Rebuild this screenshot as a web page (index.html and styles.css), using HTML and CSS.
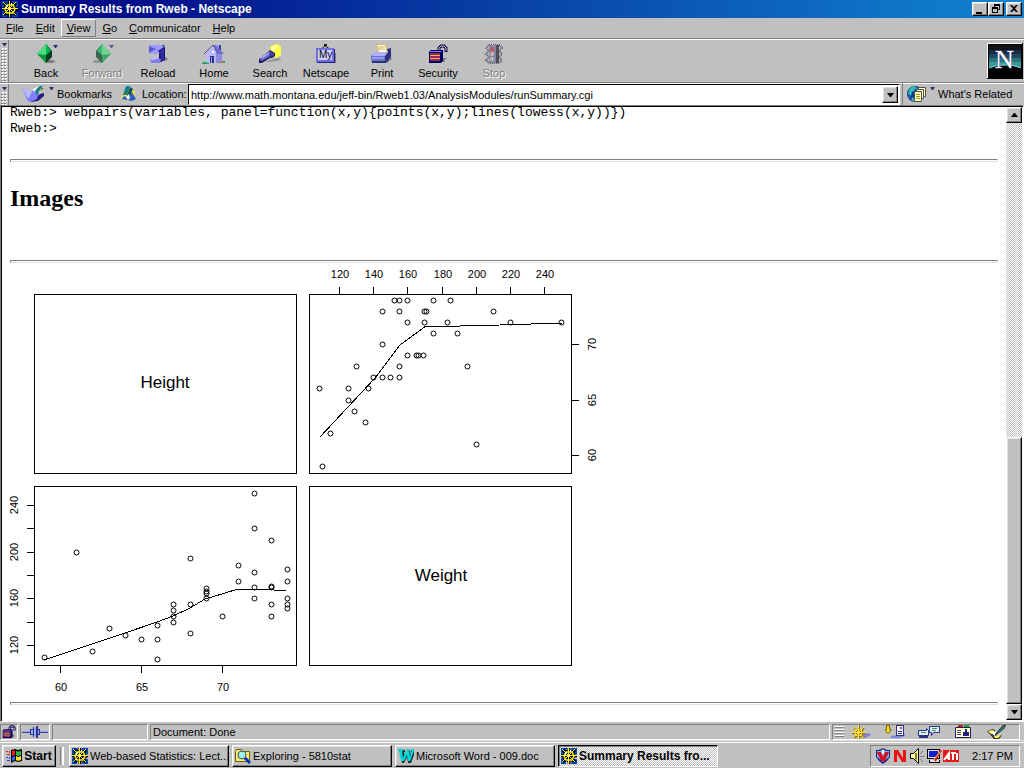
FILE: index.html
```html
<!DOCTYPE html>
<html lang="en">
<head>
    <meta charset="UTF-8">
    <meta name="viewport" content="width=device-width, initial-scale=1.0">
    <title>Summary Results from Rweb - Netscape</title>
    <link rel="stylesheet" href="styles.css">
</head>
<body>
    <!-- Shared icons -->
    <svg class="sprites" aria-hidden="true">
        <symbol id="wheel" viewBox="0 0 16 16">
            <path fill="#0048b8" d="M0 0h6v4H3v3H0zM10 0h6v6h-5zM0 10h5v6H0zM11 11h5v5h-6z"/>
            <path fill="none" stroke="#000" stroke-width="3" d="M8 0v16M0 8h16M2 2l12 12M14 2L2 14"/>
            <path fill="none" stroke="#000" stroke-width="3" d="M5 4l6 0 2 4-2 4H5L3 8z"/>
            <path fill="none" stroke="#ffee20" d="M7.5 0v16M0 7.500h16M1 1l13 13M14 1L1 14"/>
            <path fill="none" stroke="#ffee20" stroke-width="1.500" d="M5 4l6 0 2 4-2 4H5L3 8z"/>
            <path fill="#fff" d="M4 4h2v1H5v2H4zM9 2h1v2H9z"/>
            <path fill="#fff8a0" d="M7 7h2v2H7z"/>
        </symbol>
        <symbol id="gem" viewBox="0 0 20 20">
            <path fill="#808080" d="M8 16h10v1h2l-3 2H9z"/>
            <path fill="#0a9a3c" d="M10 0L1 10l9 9z"/>
            <path fill="#4cdc80" d="M10 0L1 10l9 1z"/>
            <path fill="#004020" d="M10 0l6 7v6l-6 6z"/>
            <path fill="#00b850" d="M10 0l5 7-5 4z"/>
        </symbol>
        <symbol id="lock" viewBox="0 0 20 20">
            <path fill="#808080" d="M14 14h5v1h-2v3h-3z"/>
            <path fill="none" stroke="#000060" stroke-width="3" d="M11 9V4l2-2h3l2 2v4"/>
            <path fill="none" stroke="#f0c090" d="M11 9V4l2-2h3l2 2v3"/>
            <path fill="#000060" d="M1 8l2-2h12v11l-2 2H1z"/>
            <path fill="#8080ff" d="M2 8l1-1h11l-1 1z"/>
            <path fill="#a02060" d="M2 9h10v2H2zM2 12h10v2H2zM2 15h10v2H2z"/>
            <path fill="#e0c040" d="M2 11h10v1H2zM2 14h10v1H2z"/>
        </symbol>
        <symbol id="arrow" viewBox="0 0 5 3">
            <path fill="#303070" d="M0 0h5L3 3H2z"/>
        </symbol>
    </svg>

    <header class="title-bar">
        <svg class="icon16"><use href="#wheel"/></svg>
        <h1>Summary Results from Rweb - Netscape</h1>
        <div class="window-buttons">
            <button class="raised" aria-label="Minimize"><svg viewBox="0 0 12 10"><path d="M2 8h6v2H2z"/></svg></button>
            <button class="raised" aria-label="Restore"><svg viewBox="0 0 12 10"><path d="M4 0h6v6H8V5h1V2H5v1H4zM2 3h6v6H2zm1 2v3h4V5z" fill-rule="evenodd"/></svg></button>
            <button class="raised close" aria-label="Close"><svg viewBox="0 0 12 10"><path d="M2 1h2l2 2 2-2h2L7 4.500 10 8H8L6 6 4 8H2l3-3.500z"/></svg></button>
        </div>
    </header>

    <nav class="menu-bar">
        <button><u>F</u>ile</button>
        <button><u>E</u>dit</button>
        <button class="active"><u>V</u>iew</button>
        <button><u>G</u>o</button>
        <button><u>C</u>ommunicator</button>
        <button><u>H</u>elp</button>
    </nav>

    <div class="toolbar">
        <div class="grip"><svg class="arrow"><use href="#arrow"/></svg></div>
        <div class="tools">
            <button class="tool">
                <span class="tool-icon"><svg class="icon20"><use href="#gem"/></svg><svg class="arrow drop"><use href="#arrow"/></svg></span>
                Back
            </button>
            <button class="tool" disabled>
                <span class="tool-icon"><svg class="icon20 flip"><use href="#gem"/></svg><svg class="arrow drop"><use href="#arrow"/></svg></span>
                Forward
            </button>
            <button class="tool">
                <span class="tool-icon"><svg class="icon20" viewBox="0 0 20 20">
                    <path fill="#808080" d="M15 11l5 4-3 2z"/>
                    <path fill="#101070" d="M6 1h10l1 3v12l-4 2H9l2-3V8l-4 2z"/>
                    <path fill="#9a9aff" d="M1 1h13l2 2-6 4 2 2-10 1V7l5-2-5-2z"/>
                    <path fill="#5c5cd0" d="M1 2l7 3-7 4z"/>
                    <path fill="#2c2ca0" d="M12 6l4-2v12l-3 1z"/>
                    <path fill="#8080f0" d="M2 15l6-2 5 2-1 4H3z"/>
                    <path fill="#c8c8ff" d="M2 15l6-2 3 1-6 2z"/>
                </svg></span>
                Reload
            </button>
            <button class="tool">
                <span class="tool-icon"><svg class="icon24" viewBox="0 0 24 20">
                    <path fill="#20a060" d="M1 18h6v2H0zM16 17h7v2h-7z"/>
                    <path fill="#e07040" d="M5 17h3v2H5zM18 17h3v2h-3z"/>
                    <path fill="#404090" d="M15 1h4v8h-4z"/>
                    <path fill="#9a9aff" d="M15 1h2v6h-2z"/>
                    <path fill="#b8b8ff" d="M5 9l6-6 3 4v12H5z"/>
                    <path fill="#8c8ce0" d="M14 9h6v9l-6 1z"/>
                    <path fill="#7070d0" d="M11 1h3l8 9h-6z"/>
                    <path fill="none" stroke="#50509a" d="M2 10l9-9 5 9"/>
                    <path fill="#303080" d="M8 12h4v7H8z"/>
                    <path fill="#9a9aff" d="M9 13h1v6H9z"/>
                    <path fill="#fff" d="M10 7h2v2h-2z"/>
                </svg></span>
                Home
            </button>
            <button class="tool">
                <span class="tool-icon"><svg class="icon24" viewBox="0 0 24 20">
                    <path fill="#ffff40" d="M12 3l3-2 5-1 3 3v8l-5 3-5-4z"/>
                    <path fill="#fffcb0" d="M15 2l5-1-3 6-4-1z"/>
                    <path fill="#909090" d="M6 18l13-4 5 1-5 2z"/>
                    <path fill="#202060" d="M1 15l9-7 2-2 5 3v3l-3 2h-2l-8 5H1z"/>
                    <path fill="#6c6cd0" d="M1 15l9-6 3 1-1 2-8 5z"/>
                    <path fill="#b0b0ff" d="M2 14l9-6h2l-8 6z"/>
                    <path fill="#4040a0" d="M12 7l4 2v2l-3 2-2-3z"/>
                </svg></span>
                Search
            </button>
            <button class="tool">
                <span class="tool-icon"><svg class="icon20" viewBox="0 0 20 20">
                    <path fill="#808080" d="M5 19h15V9h-2z"/>
                    <path fill="none" stroke="#202020" d="M5 5l4-3 5 3"/>
                    <path fill="#202020" d="M8 0h3v2H8z"/>
                    <path fill="#202080" d="M0 5h19v14H1z"/>
                    <path fill="#7070e0" d="M0 4h18v14H0z"/>
                    <path fill="#d0d0ff" d="M2 6h14v10H2z"/>
                    <text class="my-text" x="3" y="14">My</text>
                </svg></span>
                Netscape
            </button>
            <button class="tool">
                <span class="tool-icon"><svg class="icon24" viewBox="0 0 24 20">
                    <path fill="#808080" d="M7 18l14-4h2l-6 5z"/>
                    <path fill="#303080" d="M1 11l16-6 4-1v9l-5 6H2z"/>
                    <path fill="#fffbd8" stroke="#d8b860" d="M6.500.500h9l2 8h-9z"/>
                    <path stroke="#d8a860" d="M8 3h7M8 5h7"/>
                    <path fill="#b0b0ff" d="M1 11l4-3h13l-3 4H2z"/>
                    <path fill="#7070d0" d="M1 12h14v5H2z"/>
                    <path fill="#9a9aff" d="M2 13h12v2H2z"/>
                    <path fill="#00d040" d="M12 16h2v1h-2z"/>
                </svg></span>
                Print
            </button>
            <button class="tool">
                <span class="tool-icon"><svg class="icon20"><use href="#lock"/></svg></span>
                Security
            </button>
            <button class="tool" disabled>
                <span class="tool-icon"><svg class="icon20" viewBox="0 0 20 20">
                    <path fill="none" stroke="#303050" stroke-dasharray="1 1" stroke-width="2" d="M5 1h11l2 3-3 3 3 3-3 3 3 3-3 3H5l-3-3 3-3-3-3 3-3-3-3z"/>
                    <path fill="#707098" d="M5 1h9v18H5z"/>
                    <path fill="#202030" d="M12 1h3v18h-3z"/>
                    <circle cx="8" cy="5" r="2" fill="#e02020"/>
                    <circle cx="8" cy="10" r="2" fill="#e0b0a0"/>
                    <circle cx="8" cy="15" r="2" fill="#a0c8b0"/>
                </svg></span>
                Stop
            </button>
        </div>
        <svg class="netscape-logo" viewBox="0 0 36 36" role="img" aria-label="Netscape">
            <path fill="#000" d="M0 0h36v36H0z"/>
            <path fill="#fff" d="M0 0h35v1H1v34H0z"/>
            <path fill="#101418" d="M2 2h32v32H2z"/>
            <path fill="#182a44" d="M2 7h32v4H2z"/>
            <path fill="#20485c" d="M2 11h32v4H2z"/>
            <path fill="#2c747c" d="M2 15h32v4H2z"/>
            <path fill="#3c9a9c" d="M2 19h32v5H2z"/>
            <path fill="#000" d="M2 25q6-3 16-3t16 3v9H2z"/>
            <path fill="none" stroke="#80e0e0" d="M2 25q6-3 16-3t16 3"/>
            <text class="logo-letter" x="8" y="25">N</text>
        </svg>
    </div>

    <div class="toolbar location-bar">
        <div class="grip"><svg class="arrow"><use href="#arrow"/></svg></div>
        <button class="link-button bookmarks">
            <svg class="icon24" viewBox="0 0 24 18">
                <path fill="#202080" d="M8 17l8-1 6-5V8l-4 1z"/>
                <path fill="#8080ff" d="M0 3l5 2 4 2 5-3 3 3-2 7-7 3-3-2z"/>
                <path fill="#b8b8ff" d="M0 3l5 2 5 2-4 7z"/>
                <path fill="#108080" d="M13 5l5-4h3l-4 5-2 5z"/>
                <path fill="#fff" d="M11 4l6-3-5 6z"/>
                <path fill="#b07040" d="M19 3h3l-3 3z"/>
            </svg>
            <svg class="arrow"><use href="#arrow"/></svg>
            Bookmarks
        </button>
        <label class="location-label" for="location">
            <svg class="icon16" viewBox="0 0 16 16">
                <path fill="#ffe040" d="M0 12l5-8 5-2 4 4v6l-6 3z"/>
                <path fill="#2860c0" d="M1 13l2-3 4 2 4-6 4 7-4 2z"/>
                <path fill="#108080" d="M5 0h4l-3 9H2z"/>
                <path fill="#0a5060" d="M9 1l3 2-4 9H5z"/>
                <path fill="#fff" d="M5 11l3-3 1 4-2 2z"/>
            </svg>
            Location:
        </label>
        <div class="location-box">
            <input id="location" type="text" value="http://www.math.montana.edu/jeff-bin/Rweb1.03/AnalysisModules/runSummary.cgi">
            <button class="raised" aria-label="Show visited locations"><svg viewBox="0 0 7 4"><path d="M0 0h7L4 4H3z"/></svg></button>
        </div>
        <button class="link-button related">
            <svg class="icon20" viewBox="0 0 20 16">
                <circle cx="8" cy="8" r="8" fill="#103890"/>
                <path fill="#30b8b0" d="M2 3l4-3 4 1-3 4-2 1-1 4-3-2zM5 11l3 2v3l-4-2z"/>
                <path fill="#6090ff" d="M9 2l4 1-4 2zM1 10l2 1v2z"/>
                <path fill="#ffffc0" stroke="#505050" d="M11.500 1.500h7v9h-7z"/>
                <path fill="#ffffc0" stroke="#505050" d="M9.500 3.500h7v9h-7z"/>
                <path fill="#ffffc0" stroke="#505050" d="M7.500 5.500h7v10h-7z"/>
                <path stroke="#a09020" d="M9 8.500h4M9 10.500h4M9 12.500h4"/>
            </svg>
            <svg class="arrow"><use href="#arrow"/></svg>
            What's Related
        </button>
    </div>

    <div class="viewport">
        <main class="page">
<pre>Rweb:&gt; webpairs(variables, panel=function(x,y){points(x,y);lines(lowess(x,y))})
Rweb:&gt;</pre>
            <hr>
            <h2>Images</h2>
            <hr>
            <svg id="pairs" class="pairs" viewBox="10 263 600 439" role="img" aria-label="Pairs plot of Height and Weight">
                <path class="frame" d="M34.500 294.500h262v179h-262zM309.500 294.500h262v179h-262zM34.500 486.500h262v179h-262zM309.500 486.500h262v179h-262z"/>
                <text class="variable" x="165" y="388">Height</text>
                <text class="variable" x="441" y="581">Weight</text>
            </svg>
            <hr>
        </main>
        <div class="scrollbar">
            <button class="raised" aria-label="Scroll up"><svg viewBox="0 0 7 4"><path d="M3 0h1l3 4H0z"/></svg></button>
            <div class="track"><div class="thumb raised"></div></div>
            <button class="raised" aria-label="Scroll down"><svg viewBox="0 0 7 4"><path d="M0 0h7L4 4H3z"/></svg></button>
        </div>
    </div>

    <div class="status-bar">
        <div class="panel status-lock"><svg class="icon14"><use href="#lock"/></svg></div>
        <div class="panel status-plug">
            <svg viewBox="0 0 26 12">
                <path stroke="#4040a0" stroke-width="2" d="M0 6h9M17 6h9"/>
                <path stroke="#a0a0ff" d="M0 5.500h9M17 5.500h9"/>
                <path fill="#303090" d="M8 3h3V1h1v10h-1V9H8zM14 0h2v3h2v6h-2v3h-2z"/>
                <path fill="#8cb0f0" d="M9 4h2v4H9zM12 2h2v8h-2zM16 4h1v4h-1z"/>
            </svg>
        </div>
        <div class="panel status-progress"></div>
        <div class="panel status-text">Document: Done</div>
        <div class="panel components">
            <span class="ridges"></span>
            <button aria-label="Navigator">
                <svg class="icon20" viewBox="0 0 20 14">
                    <path fill="#8080d0" d="M10 10l8-2 2 2-6 3z"/>
                    <path stroke="#907000" stroke-width="2" d="M8 0v14M1 8h14M3 3l10 10M13 3L3 13"/>
                    <circle cx="8" cy="8" r="3.500" fill="none" stroke="#907000" stroke-width="2"/>
                    <path stroke="#ffe040" d="M7.500 0v14M0 7.500h15M2 2l11 11M13 2L2 13"/>
                    <circle cx="7.500" cy="7.500" r="3.500" fill="none" stroke="#ffe040"/>
                </svg>
            </button>
            <button aria-label="Inbox">
                <svg class="icon20" viewBox="0 0 20 14">
                    <path fill="#ffe020" stroke="#806000" d="M1.500.500h3v4h2l-3.500 4-3.500-4h2z"/>
                    <path fill="#8080e0" d="M6 11l15-2v2l-7 2H6z"/>
                    <path fill="#303080" d="M11 0h8v11h-8z"/>
                    <path fill="#f0f0ff" d="M12 1h6v9h-6z"/>
                    <path fill="#c04060" d="M15 2h2v2h-2z"/>
                    <path stroke="#303080" d="M13 6.500h4M13 8.500h4"/>
                </svg>
            </button>
            <button aria-label="Newsgroups">
                <svg class="icon24" viewBox="0 0 24 14">
                    <path fill="#d8f0ff" stroke="#303080" d="M1.500 5.500h8v-2l2 2v5h-10zM12.500 1.500h10v6h-6l-2 3v-3h-2z"/>
                    <path stroke="#303080" stroke-width="2" d="M2 12h9"/>
                    <path stroke="#409060" d="M4 7.500h5M15 3.500h5M15 5.500h4"/>
                </svg>
            </button>
            <button aria-label="Address Book">
                <svg class="icon16" viewBox="0 0 16 14">
                    <path fill="#c02020" d="M3 0h5v3H3z"/>
                    <path fill="#20a040" d="M9 0h5v3H9z"/>
                    <path fill="#ffffd0" stroke="#202060" d="M.500 2.500h15v10H.500z"/>
                    <path stroke="#404080" d="M2 5.500h4M2 7.500h4M2 9.500h4"/>
                    <path fill="#202080" d="M10 4h2v3h2v4H8V7h2z"/>
                </svg>
            </button>
            <button aria-label="Composer">
                <svg class="icon20" viewBox="0 0 20 14">
                    <path fill="#303030" d="M0 6l6-2 3 2 1 5 5-1-3 4H7z"/>
                    <path fill="#ffff60" d="M1 6l5-1 2 2-4 2zM7 11l7-1-3 3H8z"/>
                    <path fill="#fff" d="M4 8l5-2 4 3-5 2z"/>
                    <path fill="#303030" d="M8 9l8-9h3l-1 3-7 6-3 2z"/>
                    <path fill="#20a080" d="M10 8l7-7 1 1-7 6z"/>
                </svg>
            </button>
        </div>
    </div>

    <footer class="taskbar">
        <button class="start raised">
            <svg class="icon16" viewBox="0 0 16 14">
                <path fill="#000" d="M5 1l4-1 3 1 4-1v12l-4 1-3-1-4 2z"/>
                <path fill="#f02020" d="M6 2l3-1v5L6 7z"/>
                <path fill="#20c040" d="M10 2l2 .500L15 2v4l-3 1-2-1z"/>
                <path fill="#3060ff" d="M6 8l3-1v4l-3 1z"/>
                <path fill="#ffe020" d="M10 7l2 1 3-1v4l-3 1-2-1z"/>
                <path fill="#e02020" d="M0 2h2v1H0zM3 2h1v2H3zM1 5h3v1H1z"/>
                <path fill="#2040e0" d="M0 8h2v1H0zM3 8h1v2H3zM1 11h3v1H1z"/>
            </svg>
            Start
        </button>
        <span class="handle"></span>
        <div class="tasks">
            <button class="raised"><svg class="icon16"><use href="#wheel"/></svg><span>Web-based Statistics: Lect...</span></button>
            <button class="raised">
                <svg class="icon16" viewBox="0 0 16 16">
                    <path fill="#ffe878" stroke="#706000" d="M.500 3.500l1-2h5l1 2h7v10H.500z"/>
                    <circle cx="7" cy="7" r="4" fill="#a0f0f0" stroke="#405060"/>
                    <path stroke="#0030c0" stroke-width="3" d="M10 10l5 5"/>
                </svg>
                <span>Exploring - 5810stat</span>
            </button>
            <button class="raised">
                <svg class="icon16" viewBox="0 0 16 16">
                    <path fill="#003030" d="M1 2h6v2H6l1 5 3-7h2l1 7 1-5h-1V2h4v2l-4 11h-3l-1-6-3 6H4L2 4H1z"/>
                    <path fill="#00d8d8" d="M0 1h5v2H4l1 7 4-9h2l1 8 2-6h-1V1h3v2l-4 10h-2L9 7l-3 6H3L1 3H0z"/>
                </svg>
                <span>Microsoft Word - 009.doc</span>
            </button>
            <button class="current"><svg class="icon16"><use href="#wheel"/></svg><span>Summary Results fro...</span></button>
        </div>
        <div class="tray">
            <svg class="icon16" viewBox="0 0 16 16">
                <path fill="#202080" d="M1 2h3l4-2 4 2h3v7l-3 4-4 3-4-3-3-4z"/>
                <path fill="#80b0f0" d="M2 3h3l3-2 3 2h3v6l-6 5-6-5z"/>
                <path fill="#fff" d="M7 2h2v4H7z"/>
                <path fill="#d01020" d="M2 4h4l2 5 2-5h4l-4 9H6z"/>
            </svg>
            <svg class="icon16" viewBox="0 0 16 16"><path fill="#f01010" d="M2 2h4l5 8V2h3v12h-4L5 6v8H2z"/></svg>
            <svg class="icon16" viewBox="0 0 16 16">
                <path fill="#ffff90" stroke="#000" d="M1.500 5.500h3l5-5v15l-5-5h-3z"/>
                <path fill="#808040" d="M6 5h2v8l-2-2z"/>
                <path stroke="#808080" d="M11 6l3-3M11 8.500h5M11 11l3 3"/>
            </svg>
            <svg class="icon16" viewBox="0 0 16 16">
                <path fill="#000" d="M1 1h13v10H1zM3 12h11v3H3z"/>
                <path fill="#e0e0e0" d="M2 2h11v8H2zM4 12h9v2H4z"/>
                <path fill="#1020d0" d="M3 3h9v6H3z"/>
                <path stroke="#e02020" stroke-width="2" d="M9 13l6-11"/>
                <path stroke="#ffe020" d="M8 11l6-7"/>
            </svg>
            <svg class="icon16" viewBox="0 0 16 16">
                <path fill="#e81818" d="M0 2h16v12H0z"/>
                <path fill="none" stroke="#fff" stroke-width="2" d="M1 12l5-7v7M3 10h3M8 5h5M10 5v7M14 5v7"/>
            </svg>
            <time>2:17 PM</time>
        </div>
    </footer>

    <script src="plot.js"></script>
</body>
</html>
```

FILE: styles.css
```css
:root {
    --face: #c0c0c0;
    --shadow: #808080;
    --light: #e0e0e0;
    --title-start: #000080;
    --title-end: #1084d0;
}

* {
    margin: 0;
    padding: 0;
    box-sizing: border-box;
}

body {
    display: flex;
    flex-direction: column;
    height: 100vh;
    overflow: hidden;
    background: var(--face);
    color: #000;
    font-family: "Liberation Sans", Arial, sans-serif;
    font-size: 11px;
    line-height: 14px;
}

button,
input {
    font: inherit;
    color: inherit;
    background: none;
    border: none;
    border-radius: 0;
}

button {
    white-space: nowrap;
}

svg {
    flex: none;
}

.sprites {
    position: absolute;
    width: 0;
    height: 0;
}

.icon14 { width: 14px; height: 14px; }
.icon16 { width: 16px; height: 16px; }
.icon20 { width: 20px; height: 20px; }
.icon24 { width: 24px; height: 20px; }
.arrow { width: 5px; height: 3px; }

.raised {
    display: flex;
    align-items: center;
    justify-content: center;
    background: var(--face);
    border: 1px solid;
    border-color: #fff #000 #000 #fff;
    box-shadow: inset -1px -1px var(--shadow), inset 1px 1px var(--light);
}

/* Title bar */
.title-bar {
    display: flex;
    align-items: center;
    gap: 3px;
    height: 18px;
    padding: 0 2px;
    background: linear-gradient(to right, var(--title-start), var(--title-end));
    color: #fff;
}

.title-bar h1 {
    flex: 1;
    font-size: 12px;
}

.window-buttons {
    display: flex;
}

.window-buttons button {
    width: 16px;
    height: 14px;
}

.window-buttons svg {
    width: 12px;
    height: 10px;
}

.window-buttons .close {
    margin-left: 2px;
}

/* Menu bar */
.menu-bar {
    display: flex;
    align-items: center;
    height: 20px;
}

.menu-bar button {
    height: 18px;
    padding: 0 5px;
    border: 1px solid transparent;
}

.menu-bar .active {
    border-color: #fff var(--shadow) var(--shadow) #fff;
}

/* Toolbars */
.toolbar {
    display: flex;
    height: 44px;
    border-top: 1px solid var(--shadow);
    box-shadow: inset 0 1px #fff;
}

.grip {
    display: flex;
    flex-direction: column;
    align-items: center;
    gap: 2px;
    width: 9px;
    padding-top: 3px;
    margin-top: 1px;
    border-right: 1px solid var(--shadow);
}

.grip::after {
    content: "";
    flex: 1;
    width: 6px;
    background: conic-gradient(#fff 25%, transparent 0 50%, var(--shadow) 0 75%, transparent 0) 0 0 / 3px 3px;
}

.tools {
    display: flex;
    flex: 1;
    padding-left: 9px;
}

.tool {
    display: flex;
    flex-direction: column;
    align-items: center;
    width: 56px;
    padding-top: 5px;
}

.tool-icon {
    position: relative;
    height: 22px;
}

.tool-icon .drop {
    position: absolute;
    top: 1px;
    right: -2px;
}

.tool .flip {
    transform: scaleX(-1);
}

.tool:disabled {
    color: var(--shadow);
    text-shadow: 1px 1px #fff;
}

.tool:disabled .tool-icon {
    opacity: 0.7;
}

.my-text {
    font-size: 10px;
}

.netscape-logo {
    width: 36px;
    height: 36px;
    margin: 4px 1px 0 0;
}

.logo-letter {
    fill: #fff;
    stroke: #6060a0;
    paint-order: stroke;
    font-family: "Liberation Serif", "Times New Roman", serif;
    font-size: 26px;
}

.location-bar {
    height: 23px;
}

.link-button {
    display: flex;
    align-items: center;
    gap: 3px;
}

.link-button .arrow {
    align-self: flex-start;
    margin-top: 4px;
}

.bookmarks {
    width: 112px;
    padding-left: 13px;
}

.location-label {
    display: flex;
    align-items: center;
    gap: 5px;
    width: 67px;
}

.location-box {
    display: flex;
    flex: 1;
    margin: 1px 2px 0 0;
    padding: 1px;
    background: #fff;
    border: 1px solid;
    border-color: #000 #fff #fff #000;
}

.location-box input {
    flex: 1;
    min-width: 0;
    padding-left: 1px;
    outline: none;
}

.location-box button {
    width: 16px;
}

.location-box button svg,
.scrollbar button svg {
    width: 7px;
    height: 4px;
}

.related {
    width: 122px;
    padding-left: 4px;
    border-left: 1px solid var(--shadow);
}

/* Page area */
.viewport {
    display: flex;
    flex: 1;
    min-height: 0;
    background: #fff;
    border: 1px solid;
    border-color: var(--shadow) #fff #fff var(--shadow);
    box-shadow: inset 1px 1px #000;
    padding: 1px;
}

.page {
    flex: 1;
    min-width: 0;
    margin-top: -2px;
    padding: 0 8px;
    clip-path: inset(2px 0 0 0);
}

.page pre {
    font-family: "Liberation Mono", "Courier New", monospace;
    font-size: 13px;
    line-height: 16px;
}

.page hr {
    height: 3px;
    border: 1px solid;
    border-color: var(--shadow) var(--light) var(--light) var(--shadow);
}

.page pre + hr {
    margin-top: 22px;
}

.page h2 {
    margin: 22px 0 48px;
    font-family: "Liberation Serif", "Times New Roman", serif;
    font-size: 24px;
    line-height: 28px;
}

.pairs {
    display: block;
    width: 600px;
    height: 439px;
    overflow: visible;
    font-size: 11px;
    text-anchor: middle;
}

.pairs path,
.pairs circle {
    fill: none;
    stroke: #000;
}

.pairs path {
    shape-rendering: crispEdges;
}

.pairs .variable {
    font-size: 17px;
}

.scrollbar {
    display: flex;
    flex-direction: column;
    width: 16px;
}

.scrollbar button {
    height: 16px;
}

.track {
    display: flex;
    flex: 1;
    flex-direction: column;
    justify-content: flex-end;
    background: conic-gradient(#fff 25%, var(--face) 0 50%, #fff 0 75%, var(--face) 0) 0 0 / 2px 2px;
}

.thumb {
    height: 46%;
}

/* Status bar */
.status-bar {
    display: flex;
    gap: 2px;
    height: 18px;
    padding: 2px 4px 0 0;
}

.panel {
    display: flex;
    align-items: center;
    height: 16px;
    border: 1px solid;
    border-color: var(--shadow) #fff #fff var(--shadow);
}

.status-lock {
    width: 18px;
    padding-left: 1px;
}

.status-plug {
    width: 30px;
    padding-left: 1px;
}

.status-plug svg {
    width: 26px;
    height: 12px;
}

.status-progress {
    width: 96px;
}

.status-text {
    flex: 1;
    padding-left: 2px;
}

.components {
    width: 188px;
    padding-left: 2px;
}

.components button {
    display: flex;
    justify-content: center;
    width: 34px;
}

.components svg {
    height: 14px;
}

.ridges {
    width: 9px;
    height: 12px;
    background: repeating-linear-gradient(#fff 0 1px, var(--shadow) 1px 2px, var(--face) 2px 3px);
}

/* Taskbar */
.taskbar {
    display: flex;
    align-items: center;
    height: 28px;
    padding: 2px 4px 0 2px;
    border-top: 1px solid var(--light);
    box-shadow: inset 0 1px var(--face), inset 0 2px #fff;
}

.taskbar button {
    height: 22px;
}

.taskbar .start {
    gap: 2px;
    width: 54px;
    font-size: 12px;
    font-weight: bold;
}

.handle {
    width: 4px;
    height: 18px;
    margin: 0 4px;
    border-left: 1px solid var(--shadow);
    border-right: 2px solid #fff;
}

.tasks {
    display: flex;
    flex: 1;
    gap: 3px;
    padding-left: 1px;
}

.tasks button {
    display: flex;
    align-items: center;
    justify-content: flex-start;
    gap: 2px;
    width: 160px;
    padding-left: 2px;
}

.tasks .current {
    background: conic-gradient(#fff 25%, var(--face) 0 50%, #fff 0 75%, var(--face) 0) 0 0 / 2px 2px;
    border: 1px solid;
    border-color: #000 #fff #fff #000;
    box-shadow: inset 1px 1px var(--shadow);
    font-size: 12px;
    font-weight: bold;
}

.tray {
    display: flex;
    align-items: center;
    gap: 1px;
    width: 150px;
    height: 22px;
    padding-left: 4px;
    border: 1px solid;
    border-color: var(--shadow) #fff #fff var(--shadow);
}

.tray time {
    flex: 1;
    padding-right: 6px;
    text-align: right;
}
```

FILE: plot.js
```js
const svg = document.getElementById('pairs');

// [weight, height]
const people = [
    [152, 74], [155, 74], [160, 74], [175, 74], [185, 74],
    [145, 73], [155, 73], [170, 73], [171, 73], [210, 73],
    [160, 72], [170, 72], [183, 72], [220, 72], [250, 72],
    [175, 71], [189, 71], [145, 70],
    [160, 69], [165, 69], [166, 69], [169, 69],
    [130, 68], [155, 68], [195, 68],
    [140, 67], [145, 67], [150, 67], [155, 67],
    [108, 66], [125, 66], [137, 66],
    [125, 65], [129, 64], [135, 63], [115, 62], [200, 61], [110, 59]
];

function add(name, attrs, text) {
    const el = document.createElementNS('http://www.w3.org/2000/svg', name);
    for (const key in attrs) {
        el.setAttribute(key, attrs[key]);
    }
    if (text) {
        el.textContent = text;
    }
    svg.appendChild(el);
}

function scale(d0, p0, d1, p1) {
    return v => Math.round(p0 + (v - d0) * (p1 - p0) / (d1 - d0));
}

// Upper right panel: height against weight
const ux = scale(120, 339, 240, 544);
const uy = scale(60, 455, 70, 344);
// Lower left panel: weight against height
const lx = scale(60, 60, 70, 222);
const ly = scale(120, 645, 240, 505);

for (const [weight, height] of people) {
    add('circle', { cx: ux(weight) + 0.5, cy: uy(height) + 0.5, r: 2.5 });
    add('circle', { cx: lx(height) + 0.5, cy: ly(weight) + 0.5, r: 2.5 });
}

add('path', { d: 'M320 437L375 378L400 345L426 326L445 326L460 326L500 325L562 323' });
add('path', { d: 'M44 660L125 633L157 622L173 616L190 608L205 599L222 594L238 589L262 589L286 591' });

for (let w = 120; w <= 240; w += 20) {
    add('path', { d: `M${ux(w) + 0.5} 287v7` });
    add('text', { x: ux(w) + 1, y: 278 }, String(w));
    add('path', { d: `M27 ${ly(w) + 0.5}h7` });
}
for (let w = 120; w <= 240; w += 40) {
    add('text', { transform: `translate(18 ${ly(w)}) rotate(-90)` }, String(w));
}
for (let h = 60; h <= 70; h += 5) {
    add('path', { d: `M572 ${uy(h) + 0.5}h7` });
    add('text', { transform: `translate(596 ${uy(h)}) rotate(-90)` }, String(h));
    add('path', { d: `M${lx(h) + 0.5} 666v7` });
    add('text', { x: lx(h) + 1, y: 691 }, String(h));
}
```
